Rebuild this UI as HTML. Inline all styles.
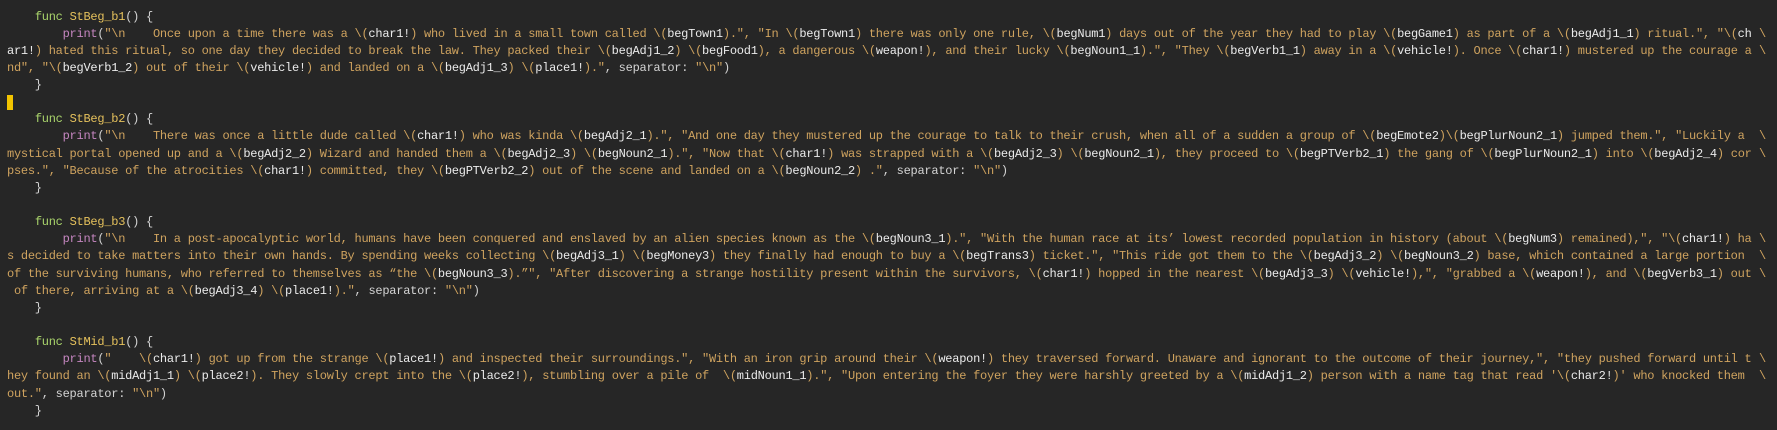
<!DOCTYPE html>
<html><head><meta charset="utf-8"><style>
html,body{margin:0;padding:0;background:#262626;width:1777px;height:430px;overflow:hidden}
#c{position:absolute;left:7px;top:8.5px;font-family:"Liberation Mono",monospace;font-size:12px;letter-spacing:-0.25px;color:#d4d4d4}
.l{position:relative;height:17.15px;line-height:17.15px;white-space:pre}
.k{color:#a9d46b}.f{color:#e5c15c}.p{color:#c586c0}.s{color:#cfa35f}.i{color:#ebebeb}
.wr{position:absolute;left:1752px;top:0;color:#cfa35f;letter-spacing:0}
#cur{position:absolute;left:7px;top:95px;width:6px;height:15px;background:#f2c400}
#m{position:absolute;visibility:hidden;white-space:pre;font-family:"Liberation Mono",monospace;font-size:12px;letter-spacing:0}
</style></head><body>
<span id="m">aaaaaaaaaaaaaaaaaaaaaaaaaaaaaaaaaaaaaaaaaaaaaaaaaaaaaaaaaaaaaaaaaaaaaaaaaaaaaaaaaaaaaaaaaaaaaaaaaaaa</span>
<div id="cur"></div>
<div id="c">
<div class="l">    <span class="k">func</span> <span class="f">StBeg_b1</span>() {</div>
<div class="l">        <span class="p">print</span>(<span class="s">"\n    Once upon a time there was a \(<span class="i">char1!</span>) who lived in a small town called \(<span class="i">begTown1</span>).", "In \(<span class="i">begTown1</span>) there was only one rule, \(<span class="i">begNum1</span>) days out of the year they had to play \(<span class="i">begGame1</span>) as part of a \(<span class="i">begAdj1_1</span>) ritual.", "\(<span class="i">ch</span></span><span class="wr">\</span></div>
<div class="l"><span class="i">ar1!</span><span class="s">) hated this ritual, so one day they decided to break the law. They packed their \(<span class="i">begAdj1_2</span>) \(<span class="i">begFood1</span>), a dangerous \(<span class="i">weapon!</span>), and their lucky \(<span class="i">begNoun1_1</span>).", "They \(<span class="i">begVerb1_1</span>) away in a \(<span class="i">vehicle!</span>). Once \(<span class="i">char1!</span>) mustered up the courage a</span><span class="wr">\</span></div>
<div class="l"><span class="s">nd", "\(<span class="i">begVerb1_2</span>) out of their \(<span class="i">vehicle!</span>) and landed on a \(<span class="i">begAdj1_3</span>) \(<span class="i">place1!</span>)."</span>, separator: <span class="s">"\n"</span>)</div>
<div class="l">    }</div>
<div class="l"> </div>
<div class="l">    <span class="k">func</span> <span class="f">StBeg_b2</span>() {</div>
<div class="l">        <span class="p">print</span>(<span class="s">"\n    There was once a little dude called \(<span class="i">char1!</span>) who was kinda \(<span class="i">begAdj2_1</span>).", "And one day they mustered up the courage to talk to their crush, when all of a sudden a group of \(<span class="i">begEmote2</span>)\(<span class="i">begPlurNoun2_1</span>) jumped them.", "Luckily a </span><span class="wr">\</span></div>
<div class="l"><span class="s">mystical portal opened up and a \(<span class="i">begAdj2_2</span>) Wizard and handed them a \(<span class="i">begAdj2_3</span>) \(<span class="i">begNoun2_1</span>).", "Now that \(<span class="i">char1!</span>) was strapped with a \(<span class="i">begAdj2_3</span>) \(<span class="i">begNoun2_1</span>), they proceed to \(<span class="i">begPTVerb2_1</span>) the gang of \(<span class="i">begPlurNoun2_1</span>) into \(<span class="i">begAdj2_4</span>) cor</span><span class="wr">\</span></div>
<div class="l"><span class="s">pses.", "Because of the atrocities \(<span class="i">char1!</span>) committed, they \(<span class="i">begPTVerb2_2</span>) out of the scene and landed on a \(<span class="i">begNoun2_2</span>) ."</span>, separator: <span class="s">"\n"</span>)</div>
<div class="l">    }</div>
<div class="l"> </div>
<div class="l">    <span class="k">func</span> <span class="f">StBeg_b3</span>() {</div>
<div class="l">        <span class="p">print</span>(<span class="s">"\n    In a post-apocalyptic world, humans have been conquered and enslaved by an alien species known as the \(<span class="i">begNoun3_1</span>).", "With the human race at its’ lowest recorded population in history (about \(<span class="i">begNum3</span>) remained),", "\(<span class="i">char1!</span>) ha</span><span class="wr">\</span></div>
<div class="l"><span class="s">s decided to take matters into their own hands. By spending weeks collecting \(<span class="i">begAdj3_1</span>) \(<span class="i">begMoney3</span>) they finally had enough to buy a \(<span class="i">begTrans3</span>) ticket.", "This ride got them to the \(<span class="i">begAdj3_2</span>) \(<span class="i">begNoun3_2</span>) base, which contained a large portion </span><span class="wr">\</span></div>
<div class="l"><span class="s">of the surviving humans, who referred to themselves as “the \(<span class="i">begNoun3_3</span>).”", "After discovering a strange hostility present within the survivors, \(<span class="i">char1!</span>) hopped in the nearest \(<span class="i">begAdj3_3</span>) \(<span class="i">vehicle!</span>),", "grabbed a \(<span class="i">weapon!</span>), and \(<span class="i">begVerb3_1</span>) out</span><span class="wr">\</span></div>
<div class="l"><span class="s"> of there, arriving at a \(<span class="i">begAdj3_4</span>) \(<span class="i">place1!</span>)."</span>, separator: <span class="s">"\n"</span>)</div>
<div class="l">    }</div>
<div class="l"> </div>
<div class="l">    <span class="k">func</span> <span class="f">StMid_b1</span>() {</div>
<div class="l">        <span class="p">print</span>(<span class="s">"    \(<span class="i">char1!</span>) got up from the strange \(<span class="i">place1!</span>) and inspected their surroundings.", "With an iron grip around their \(<span class="i">weapon!</span>) they traversed forward. Unaware and ignorant to the outcome of their journey,", "they pushed forward until t</span><span class="wr">\</span></div>
<div class="l"><span class="s">hey found an \(<span class="i">midAdj1_1</span>) \(<span class="i">place2!</span>). They slowly crept into the \(<span class="i">place2!</span>), stumbling over a pile of  \(<span class="i">midNoun1_1</span>).", "Upon entering the foyer they were harshly greeted by a \(<span class="i">midAdj1_2</span>) person with a name tag that read '\(<span class="i">char2!</span>)' who knocked them </span><span class="wr">\</span></div>
<div class="l"><span class="s">out."</span>, separator: <span class="s">"\n"</span>)</div>
<div class="l">    }</div>
</div>
<script>
(function(){
  var w = document.getElementById('m').getBoundingClientRect().width;
  var adv = w / 100;
  var ls = 6.95 - adv;
  document.getElementById('c').style.letterSpacing = ls + 'px';
})();
</script>
</body></html>
